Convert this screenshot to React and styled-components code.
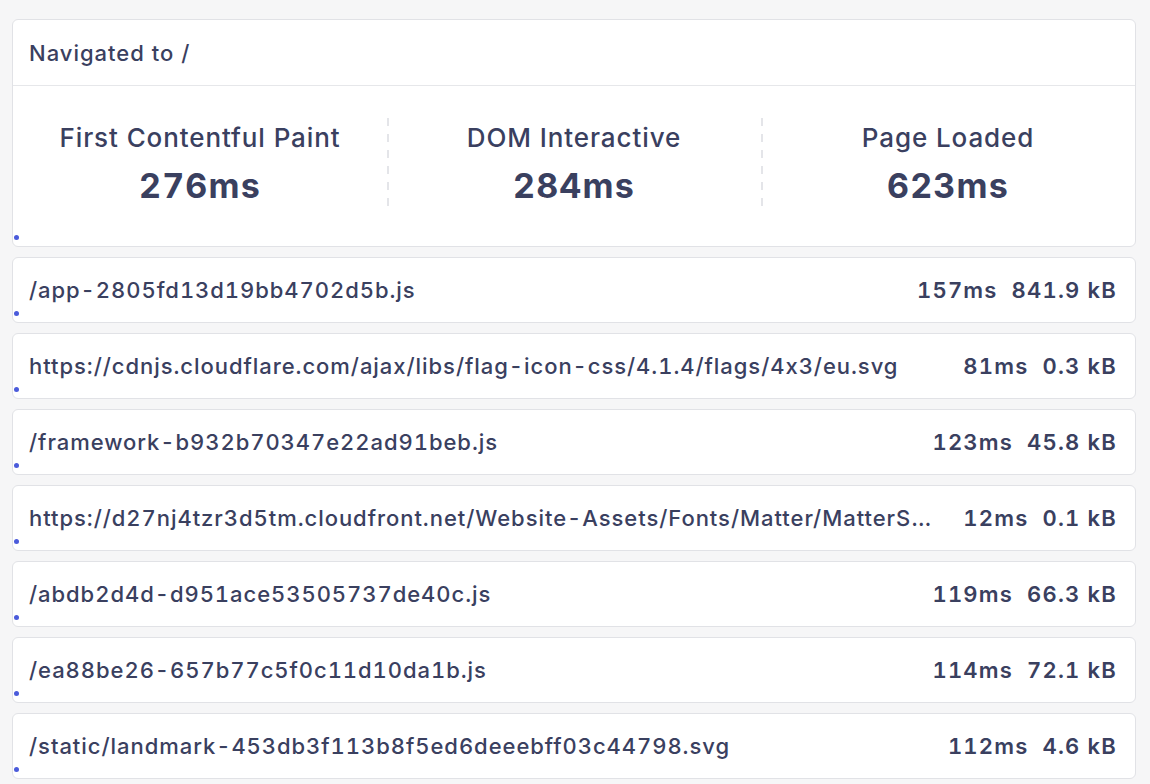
import styled, { createGlobalStyle } from 'styled-components'

const GlobalStyle = createGlobalStyle`
  body {
    margin: 0;
    background: #f6f6f7;
    font-family: 'Inter', 'Noto Sans', sans-serif;
    font-feature-settings: 'calt' 0, 'tnum' 1;
    color: #3a405f;
  }
`

const Page = styled.div`
  width: 1150px;
  height: 784px;
  overflow: hidden;
  padding: 19px 14px 0 12px;
  box-sizing: border-box;
  display: flex;
  flex-direction: column;
  gap: 10px;
`

const Card = styled.div`
  position: relative;
  flex-shrink: 0;
  background: #fff;
  border: 1px solid #e1e2e6;
  border-radius: 6px;
  box-sizing: border-box;
`

const Dot = styled.span`
  position: absolute;
  left: 1px;
  bottom: 6px;
  width: 5px;
  height: 5px;
  border-radius: 50%;
  background: #4b5bdb;
`

const Header = styled.div`
  height: 66px;
  box-sizing: border-box;
  display: flex;
  align-items: center;
  padding: 0 16px;
  border-bottom: 1px solid #e6e7ea;
  font-size: 22px;
  letter-spacing: 1px;
  font-weight: 500;
`

const Metrics = styled.div`
  height: 160px;
  box-sizing: border-box;
  padding-top: 32px;
  display: grid;
  grid-template-columns: repeat(3, 1fr);
  align-items: start;
`

const Metric = styled.div`
  height: 88px;
  display: flex;
  flex-direction: column;
  align-items: center;
  background: ${p =>
    p.$first
      ? 'none'
      : 'repeating-linear-gradient(to bottom, #e4e5e9 0 8px, transparent 8px 16px) left top / 2px 100% no-repeat'};
`

const Label = styled.div`
  margin-top: 4px;
  font-size: 26px;
  line-height: 31px;
  letter-spacing: 0.9px;
  font-weight: 500;
`

const Value = styled.div`
  margin-top: 12px;
  font-size: 34px;
  line-height: 41px;
  letter-spacing: 1.2px;
  font-weight: 700;
`

const Row = styled(Card)`
  height: 66px;
  display: flex;
  align-items: center;
  justify-content: space-between;
  gap: 22px;
  padding: 0 18px 0 16px;
  font-size: 22px;
  letter-spacing: 0.95px;
  font-weight: 500;
`

const Url = styled.div`
  flex: 1;
  min-width: 0;
  white-space: nowrap;
  overflow: hidden;
  text-overflow: ellipsis;
`

const Stats = styled.div`
  display: flex;
  gap: 14px;
  white-space: nowrap;
  font-weight: 600;
  letter-spacing: 1.2px;
`

const metrics = [
  ['First Contentful Paint', '276ms'],
  ['DOM Interactive', '284ms'],
  ['Page Loaded', '623ms'],
]

const resources = [
  ['/app-2805fd13d19bb4702d5b.js', '157ms', '841.9 kB'],
  ['https://cdnjs.cloudflare.com/ajax/libs/flag-icon-css/4.1.4/flags/4x3/eu.svg', '81ms', '0.3 kB'],
  ['/framework-b932b70347e22ad91beb.js', '123ms', '45.8 kB'],
  ['https://d27nj4tzr3d5tm.cloudfront.net/Website-Assets/Fonts/Matter/MatterSQ-Regular.woff2', '12ms', '0.1 kB'],
  ['/abdb2d4d-d951ace53505737de40c.js', '119ms', '66.3 kB'],
  ['/ea88be26-657b77c5f0c11d10da1b.js', '114ms', '72.1 kB'],
  ['/static/landmark-453db3f113b8f5ed6deeebff03c44798.svg', '112ms', '4.6 kB'],
]

export default function App() {
  return (
    <>
      <GlobalStyle />
      <Page>
        <Card>
          <Header>Navigated to /</Header>
          <Metrics>
            {metrics.map(([label, value], i) => (
              <Metric key={label} $first={i === 0}>
                <Label>{label}</Label>
                <Value>{value}</Value>
              </Metric>
            ))}
          </Metrics>
          <Dot />
        </Card>
        {resources.map(([url, time, size]) => (
          <Row key={url}>
            <Url title={url}>{url}</Url>
            <Stats>
              <span>{time}</span>
              <span>{size}</span>
            </Stats>
            <Dot />
          </Row>
        ))}
      </Page>
    </>
  )
}
